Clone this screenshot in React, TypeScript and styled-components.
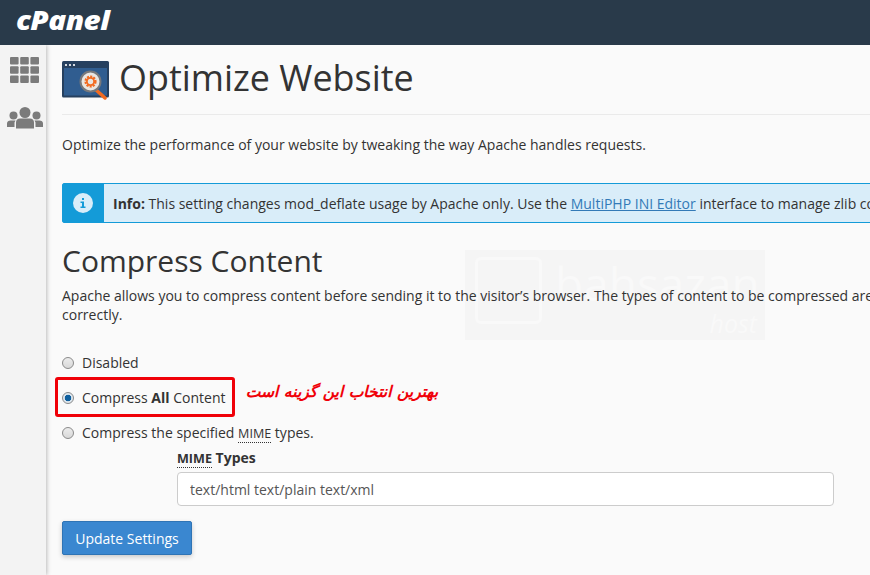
import React from "react";
import styled, { createGlobalStyle } from "styled-components";

const Global = createGlobalStyle`
  html, body { margin: 0; padding: 0; height: 100%; overflow: hidden; background: #fafafa; }
  body { font-family: "Open Sans", "Liberation Sans", sans-serif; color: #333; }
  * { box-sizing: border-box; }
`;

const Page = styled.div`
  position: relative;
  width: 870px;
  height: 575px;
  overflow: hidden;
  display: flex;
  flex-direction: column;
`;
const TopBar = styled.header`
  height: 45px;
  flex: none;
  background: #293a4a;
  display: flex;
  align-items: center;
  padding: 0 0 5px 16px;
  position: relative;
  z-index: 2;
`;
const Logo = styled.div`
  font-family: "Open Sans", sans-serif;
  font-weight: 800;
  font-style: italic;
  font-size: 26px;
  line-height: 1;
  color: #fff;
  letter-spacing: -0.5px;
  transform: scaleX(1.14);
  transform-origin: left center;
`;
const Body = styled.div`
  flex: 1;
  display: flex;
  min-height: 0;
`;
const Sidebar = styled.nav`
  width: 46px;
  flex: none;
  background: #f3f3f3;
  box-shadow: 1px 0 4px rgba(0, 0, 0, 0.25);
  display: flex;
  flex-direction: column;
  align-items: center;
  padding: 12px 0 0 3px;
  gap: 24px;
`;
const Main = styled.main`
  flex: 1;
  min-width: 0;
  padding: 0 0 0 16px;
  overflow: hidden;
`;
const TitleRow = styled.div`
  display: flex;
  align-items: flex-start;
  gap: 9px;
  height: 70px;
  border-bottom: 1px solid #eaeaea;
  padding: 16px 0 0 0;
  margin-bottom: 20px;
`;
const Title = styled.h1`
  margin: -1px 0 0;
  font-size: 35.9px;
  font-weight: 400;
  line-height: 36px;
  color: #333;
  white-space: nowrap;
`;
const Para = styled.p`
  margin: 0;
  font-size: 14px;
  line-height: 19px;
  color: #333;
  white-space: nowrap;
`;
const Alert = styled.div`
  display: flex;
  width: 1000px;
  height: 40px;
  margin-top: 29px;
  border: 1px solid #149bd8;
  border-radius: 2px;
  background: #d9edf9;
`;
const AlertIcon = styled.div`
  width: 41px;
  flex: none;
  background: #149bd8;
  display: flex;
  align-items: center;
  justify-content: center;
  padding-right: 2px;
`;
const AlertText = styled.div`
  padding-left: 9px;
  font-size: 14px;
  line-height: 39px;
  white-space: nowrap;
  color: #333;
`;
const Link = styled.a`
  color: #337ab7;
  text-decoration: underline;
`;
const H2 = styled.h2`
  margin: 19px 0 7px;
  font-size: 30px;
  line-height: 37px;
  font-weight: 400;
  color: #333;
`;
const Options = styled.div`
  margin-top: 21px;
  display: flex;
  flex-direction: column;
`;
const RadioRow = styled.label`
  display: flex;
  align-items: center;
  height: 35px;
  font-size: 14px;
  color: #333;
`;
const Radio = styled.span<{ $checked?: boolean }>`
  width: 12px;
  height: 12px;
  border-radius: 50%;
  margin-right: 8px;
  border: 1px solid #8a8a8a;
  background: ${(p) =>
    p.$checked
      ? "radial-gradient(circle, #0f5f9e 0 3px, #dfe8ef 3.6px)"
      : "linear-gradient(#ececec, #d8d8d8)"};
`;
const Abbr = styled.abbr`
  font-size: 90%;
  text-decoration: none;
  border-bottom: 1px dotted #333;
`;
const Field = styled.div`
  margin-left: 115px;
  margin-top: -2px;
`;
const FieldLabel = styled.div`
  font-size: 14px;
  font-weight: 700;
  line-height: 20px;
  color: #333;
`;
const Input = styled.input`
  display: block;
  width: 657px;
  height: 34px;
  margin-top: 3px;
  padding: 0 12px;
  font: 14px "Open Sans", sans-serif;
  color: #555;
  background: #fff;
  border: 1px solid #ccc;
  border-radius: 4px;
`;
const Button = styled.button`
  display: block;
  width: 130px;
  height: 34px;
  margin-top: 15px;
  padding: 0;
  font: 14px "Open Sans", sans-serif;
  color: #fff;
  background: #3a87d0;
  border: 1px solid #2f74b5;
  border-radius: 2px;
  box-shadow: 0 2px 5px rgba(0, 0, 0, 0.2);
`;
const Watermark = styled.div`
  position: absolute;
  left: 465px;
  top: 250px;
  width: 300px;
  height: 90px;
  background: #f5f5f5;
  color: #f9f9f9;
  overflow: hidden;
`;
const WatermarkBox = styled.div`
  position: absolute;
  left: 10px;
  top: 7px;
  width: 67px;
  height: 67px;
  border: 3px solid #f9f9f9;
  border-radius: 6px;
`;
const WatermarkName = styled.div`
  position: absolute;
  left: 90px;
  top: 5px;
  font-size: 46px;
  line-height: 56px;
  white-space: nowrap;
`;
const WatermarkHost = styled.div`
  position: absolute;
  right: 8px;
  top: 59px;
  font-size: 25px;
  line-height: 28px;
  font-style: italic;
`;
const Highlight = styled.div`
  position: absolute;
  left: 55px;
  top: 377px;
  width: 180px;
  height: 40px;
  border: 3px solid #f00008;
  border-radius: 3px;
  pointer-events: none;
`;
const Note = styled.div`
  position: absolute;
  left: 238px;
  top: 379px;
  width: 200px;
  text-align: right;
  direction: rtl;
  font-family: "DejaVu Sans", "Noto Sans", sans-serif;
  font-size: 15.6px;
  font-weight: 700;
  font-style: italic;
  line-height: 26px;
  color: #f00008;
  white-space: nowrap;
`;
const Layer = styled.div`
  position: relative;
  z-index: 1;
`;

const GridIcon = () => (
  <svg width="29" height="26" viewBox="0 0 29 26" fill="#7b7b7b">
    {[0, 1, 2].flatMap((r) =>
      [0, 1, 2].map((c) => <rect key={`${r}${c}`} x={c * 10.2} y={r * 9.2} width="8.6" height="7.6" rx="1" />)
    )}
  </svg>
);
const UsersIcon = () => (
  <svg width="36" height="22" viewBox="0 0 36 22" fill="#7b7b7b">
    <circle cx="6.5" cy="8.5" r="4" />
    <path d="M0 20v-3.5C0 14.5 1.5 13.500 3.500 13.500h5l-1 2V20z" />
    <circle cx="29.500" cy="8.500" r="4" />
    <path d="M36 20v-3.500c0-2-1.500-3-3.500-3h-5l1 2V20z" />
    <circle cx="18" cy="5.500" r="5.500" />
    <path d="M9 21.500v-6c0-2.500 1.800-4 4-4h10c2.200 0 4 1.500 4 4v6z" />
  </svg>
);
const OptimizeIcon = () => (
  <svg width="48" height="39" viewBox="0 0 48 39">
    <rect x="0" y="0" width="47" height="36.500" rx="1.500" fill="#26405f" />
    <rect x="2" y="7" width="43" height="27.500" fill="#305d90" />
    <circle cx="4" cy="4" r="1.100" fill="#fff" />
    <circle cx="8" cy="4" r="1.100" fill="#fff" />
    <circle cx="12" cy="4" r="1.100" fill="#fff" />
    <path d="M33 28l10 9" stroke="#f26b21" strokeWidth="3.500" strokeLinecap="round" />
    <circle cx="28.500" cy="20.500" r="10" fill="#e9e6e2" stroke="#77787b" strokeWidth="2" />
    <circle cx="28.500" cy="20.500" r="4.800" fill="none" stroke="#f26b21" strokeWidth="2.600" strokeDasharray="2 1.100" />
    <circle cx="28.500" cy="20.500" r="3.600" fill="none" stroke="#f26b21" strokeWidth="1.800" />
    <circle cx="28.500" cy="20.500" r="1.500" fill="#e9e6e2" />
  </svg>
);
const InfoIcon = () => (
  <svg width="20" height="20" viewBox="0 0 20 20">
    <circle cx="10" cy="10" r="10" fill="#d9edf9" />
    <path d="M7.500 8.500h3.500v5h1.500v1.500h-5v-1.500H9v-3.500H7.500z" fill="#149bd8" />
    <rect x="9" y="5" width="2" height="2" fill="#149bd8" />
  </svg>
);

export default function App() {
  return (
    <Page>
      <Global />
      <TopBar>
        <Logo>cPanel</Logo>
      </TopBar>
      <Body>
        <Sidebar>
          <GridIcon />
          <UsersIcon />
        </Sidebar>
        <Main>
          <Layer>
            <TitleRow>
              <OptimizeIcon />
              <Title>Optimize Website</Title>
            </TitleRow>
            <Para>Optimize the performance of your website by tweaking the way Apache handles requests.</Para>
            <Alert>
              <AlertIcon>
                <InfoIcon />
              </AlertIcon>
              <AlertText>
                <strong>Info:</strong> This setting changes mod_deflate usage by Apache only. Use the{" "}
                <Link href="#">MultiPHP INI Editor</Link> interface to manage zlib compression.
              </AlertText>
            </Alert>
            <H2>Compress Content</H2>
            <Para>
              Apache allows you to compress content before sending it to the visitor’s browser. The types of content to be compressed are specified by MIME type.
              <br />
              correctly.
            </Para>
            <Options>
              <RadioRow>
                <Radio />
                Disabled
              </RadioRow>
              <RadioRow>
                <Radio $checked />
                <span>
                  Compress <strong>All</strong> Content
                </span>
              </RadioRow>
              <RadioRow>
                <Radio />
                <span>
                  Compress the specified <Abbr>MIME</Abbr> types.
                </span>
              </RadioRow>
            </Options>
            <Field>
              <FieldLabel>
                <Abbr>MIME</Abbr> Types
              </FieldLabel>
              <Input defaultValue="text/html text/plain text/xml" />
            </Field>
            <Button>Update Settings</Button>
          </Layer>
        </Main>
      </Body>
      <Watermark>
        <WatermarkBox />
        <WatermarkName>bahsazan</WatermarkName>
        <WatermarkHost>host</WatermarkHost>
      </Watermark>
      <Highlight />
      <Note>بهترین انتخاب این گزینه است</Note>
    </Page>
  );
}
